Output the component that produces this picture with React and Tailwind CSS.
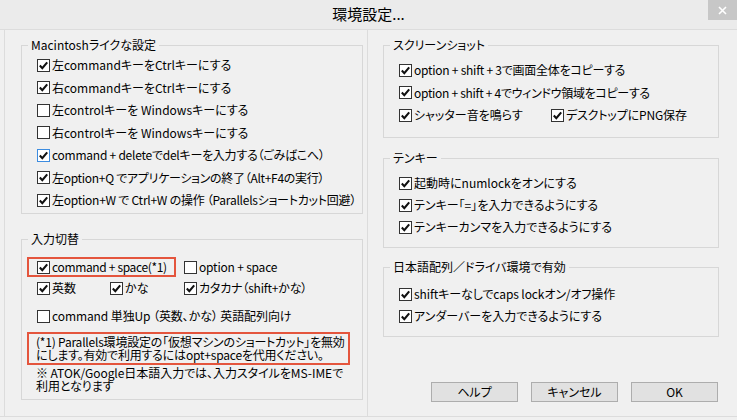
import React from "react";

function Check({ checked, focus }) {
  return (
    <span
      className={`flex h-[13px] w-[13px] shrink-0 items-center justify-center border bg-white ${
        focus ? "border-[#3c8ce0]" : "border-[#333333]"
      }`}
    >
      {checked && (
        <svg width="11" height="11" viewBox="0 0 11 11">
          <path d="M1.8 5.6 L4.3 8.2 L9.2 2.4" fill="none" stroke="#111" strokeWidth="2.1" />
        </svg>
      )}
    </span>
  );
}

function Item({ checked = true, focus, label, className = "", textClass = "" }) {
  return (
    <div className={`flex items-center gap-[2px] ${className}`}>
      <Check checked={checked} focus={focus} />
      <span className={`whitespace-nowrap ${textClass}`}>{label}</span>
    </div>
  );
}

function Group({ title, className = "", children }) {
  return (
    <fieldset className={`border border-[#d7d7d7] ${className}`}>
      <legend className="ml-[6px] px-[3px] leading-[16px] whitespace-nowrap">{title}</legend>
      {children}
    </fieldset>
  );
}

export default function App() {
  return (
    <div className="h-[420px] w-[737px] overflow-hidden bg-[#f0f0f0] font-['Noto_Sans_CJK_JP',sans-serif] text-[12px] text-black [font-feature-settings:'palt']">
      {/* title bar */}
      <div className="relative flex h-[29px] items-center justify-center bg-[#ebebeb] text-[15px]">
        <span>環境設定...</span>
        <div className="absolute right-0 top-0 flex h-[20px] w-[29px] items-center justify-center bg-[#c7c7c7]">
          <svg width="9" height="9" viewBox="0 0 9 9">
            <path d="M1 1 L8 8 M8 1 L1 8" stroke="#fff" strokeWidth="1.6" />
          </svg>
        </div>
      </div>

      <div className="flex h-[388px] border-y border-[#dcdcdc]">
        {/* left panel */}
        <div className="ml-[4px] w-[364px] border-x border-[#dcdcdc] pt-[7px]">
          <Group title="Macintoshライクな設定" className="ml-[16px] h-[177px] w-[342px]">
            <div className="flex flex-col pl-[15px] pt-[1px]">
              <Item className="h-[22.5px]" label="左commandキーをCtrlキーにする" />
              <Item className="h-[22.5px]" label="右commandキーをCtrlキーにする" />
              <Item className="h-[22.5px]" checked={false} label="左controlキーを Windowsキーにする" />
              <Item className="h-[22.5px]" checked={false} label="右controlキーを Windowsキーにする" />
              <Item
                className="h-[22.5px]"
                textClass="tracking-[-0.25px]"
                focus
                label="command + deleteでdelキーを入力する（ごみばこへ）"
              />
              <Item
                className="h-[22.5px]"
                textClass="tracking-[-0.3px]"
                label="左option+Q でアプリケーションの終了（Alt+F4の実行）"
              />
              <Item
                className="h-[22.5px]"
                textClass="tracking-[-0.25px]"
                label="左option+W で Ctrl+W の操作 （Parallelsショートカット回避）"
              />
            </div>
          </Group>

          <Group title="入力切替" className="ml-[16px] mt-[17px] h-[169px] w-[342px]">
            <div className="mt-[10px] flex items-center">
              <div className="ml-[5px] flex h-[20px] w-[149px] items-center border-2 border-[#e4553d] pl-[8px]">
                <Item textClass="tracking-[-0.35px]" label="command + space(*1)" />
              </div>
              <Item className="ml-[8px]" textClass="tracking-[-0.2px]" checked={false} label="option + space" />
            </div>
            <div className="flex h-[22px] items-center pl-[15px]">
              <Item className="w-[73px]" label="英数" />
              <Item className="w-[74px]" label="かな" />
              <Item textClass="tracking-[-0.2px]" label="カタカナ（shift+かな）" />
            </div>
            <div className="mt-[6px] flex h-[22px] items-center pl-[15px]">
              <Item checked={false} textClass="tracking-[-0.1px]" label="command 単独Up （英数、かな） 英語配列向け" />
            </div>
            <div className="ml-[5px] mt-[5px] h-[33px] w-[323px] whitespace-nowrap border-2 border-[#e4553d] pl-[7px] pt-[1px] leading-[13px] tracking-[-0.2px]">
              <div>(*1) Parallels環境設定の「仮想マシンのショートカット」を無効</div>
              <div>にします。有効で利用するにはopt+spaceを代用ください。</div>
            </div>
            <div className="ml-[14px] mt-[1px] whitespace-nowrap leading-[13px] tracking-[-0.05px]">
              <div>※ ATOK/Google日本語入力では、入力スタイルをMS-IMEで</div>
              <div>利用となります</div>
            </div>
          </Group>
        </div>

        {/* right column */}
        <div className="ml-[15px] w-[336px] pt-[7px]">
          <Group title="スクリーンショット" className="h-[101px] w-[336px]">
            <div className="flex flex-col pl-[15px] pt-[6px]">
              <Item
                className="h-[22.5px]"
                textClass="tracking-[-0.25px]"
                label="option + shift + 3で画面全体をコピーする"
              />
              <Item
                className="h-[22.5px]"
                textClass="tracking-[-0.3px]"
                label="option + shift + 4でウィンドウ領域をコピーする"
              />
              <div className="flex h-[22.5px] items-center">
                <Item className="w-[152px]" label="シャッター音を鳴らす" />
                <Item textClass="tracking-[-0.15px]" label="デスクトップにPNG保存" />
              </div>
            </div>
          </Group>

          <Group title="テンキー" className="mt-[12px] h-[98px] w-[336px]">
            <div className="flex flex-col pl-[15px] pt-[6px]">
              <Item className="h-[22px]" label="起動時にnumlockをオンにする" />
              <Item className="h-[22px]" label="テンキー「=」を入力できるようにする" />
              <Item className="h-[22px]" label="テンキーカンマを入力できるようにする" />
            </div>
          </Group>

          <Group title="日本語配列／ドライバ環境で有効" className="mt-[11px] h-[78px] w-[336px]">
            <div className="flex flex-col pl-[15px] pt-[8px]">
              <Item className="h-[22px]" textClass="tracking-[-0.1px]" label="shiftキーなしでcaps lockオン/オフ操作" />
              <Item className="h-[22px]" label="アンダーバーを入力できるようにする" />
            </div>
          </Group>

          <div className="ml-[48px] mt-[45px] flex gap-[13px]">
            {["ヘルプ", "キャンセル", "OK"].map((b) => (
              <button
                key={b}
                className="flex h-[20px] w-[87px] items-center justify-center border border-[#adadad] bg-[#e1e1e1] leading-none"
              >
                {b}
              </button>
            ))}
          </div>
        </div>
      </div>
    </div>
  );
}
